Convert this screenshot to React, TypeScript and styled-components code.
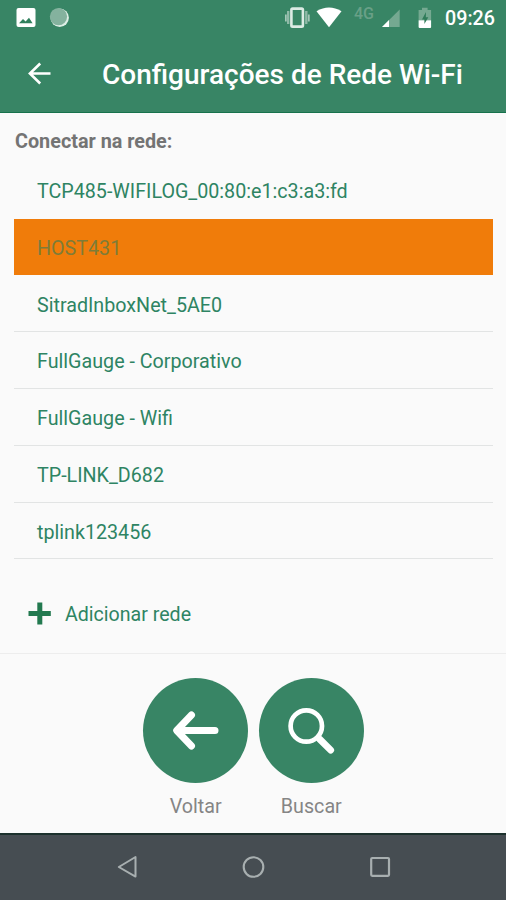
import React from 'react';
import styled, { createGlobalStyle } from 'styled-components';

const GlobalStyle = createGlobalStyle`
  * { box-sizing: border-box; }
  body { margin: 0; background: #fafafa; font-family: Roboto, "Liberation Sans", sans-serif; }
  svg { display: block; flex: none; }
`;

const green = '#388565';
const textGreen = '#2e8463';

const Screen = styled.div`
  display: flex;
  flex-direction: column;
  width: 506px;
  height: 900px;
  overflow: hidden;
  background: #fafafa;
`;

const Header = styled.header`
  height: 113px;
  background: ${green};
  border-bottom: 1px solid #17724c;
  color: #fff;
`;

const StatusBar = styled.div`
  display: flex;
  justify-content: space-between;
  height: 36px;
  padding: 0 11px 0 16px;
`;

const StatusGroup = styled.div`
  display: flex;
  align-items: center;
`;

const Clock = styled.span`
  width: 50px;
  padding-top: 1px;
  font-size: 19.7px;
  font-weight: 500;
  line-height: 36px;
  white-space: nowrap;
`;

const Toolbar = styled.div`
  display: flex;
  align-items: center;
  height: 76px;
  padding-left: 27px;
`;

const Title = styled.h1`
  margin: 2px 0 0 51px;
  font-size: 28px;
  font-weight: 500;
  line-height: 36px;
  white-space: nowrap;
`;

const IconButton = styled.button`
  padding: 0;
  border: 0;
  background: none;
  color: inherit;
`;

const Content = styled.main`
  height: 541px;
  padding: 13px 13px 0 14px;
  border-bottom: 1px solid #ededed;
`;

const SectionTitle = styled.h2`
  margin: 0 0 0 1px;
  height: 36px;
  font-size: 19.8px;
  font-weight: 700;
  line-height: 32px;
  color: #747474;
`;

const Networks = styled.ul`
  margin: 0;
  padding: 0;
  list-style: none;
`;

const Network = styled.li<{ $selected?: boolean; $plain?: boolean }>`
  height: 56.75px;
  padding-left: 23px;
  border-bottom: 1px solid ${(p) => (p.$selected || p.$plain ? 'transparent' : '#e2e4e4')};
  background: ${(p) => (p.$selected ? '#f07c0a' : 'transparent')};
  background-clip: padding-box;
  color: ${(p) => (p.$selected ? '#7d7c38' : textGreen)};
  font-size: 19.7px;
  line-height: 59px;
  white-space: nowrap;
`;

const AddNetwork = styled.button`
  display: flex;
  align-items: center;
  gap: 14px;
  height: 50px;
  margin-top: 29px;
  padding: 0 0 0 14px;
  border: 0;
  background: none;
  color: ${textGreen};
  font: 400 19.6px/26px Roboto, sans-serif;
`;

const AddLabel = styled.span`
  padding-top: 4px;
`;

const Actions = styled.section`
  display: flex;
  justify-content: center;
  gap: 10.3px;
  height: 179px;
  padding: 23.6px 0 0 1px;
`;

const Action = styled.div`
  display: flex;
  flex-direction: column;
  align-items: center;
  width: 105.3px;
`;

const RoundButton = styled.button`
  display: grid;
  place-items: center;
  width: 105.3px;
  height: 105.3px;
  padding: 0;
  border: 0;
  border-radius: 50%;
  background: ${green};
`;

const ActionLabel = styled.span`
  margin-top: 12px;
  font-size: 19.7px;
  line-height: 24px;
  color: #858585;
`;

const NavBar = styled.nav`
  display: grid;
  grid-template-columns: repeat(3, 126.5px);
  justify-content: center;
  justify-items: center;
  align-items: center;
  height: 67px;
  padding-bottom: 2px;
  border-top: 2px solid #1c312d;
  background: #464d52;
`;

const networks = [
  { name: 'TCP485-WIFILOG_00:80:e1:c3:a3:fd', plain: true },
  { name: 'HOST431', selected: true },
  { name: 'SitradInboxNet_5AE0' },
  { name: 'FullGauge - Corporativo' },
  { name: 'FullGauge - Wifi' },
  { name: 'TP-LINK_D682' },
  { name: 'tplink123456' },
];

export default function App() {
  return (
    <>
      <GlobalStyle />
      <Screen>
        <Header>
          <StatusBar>
            <StatusGroup>
              <svg width="60" height="36" viewBox="0 0 60 36">
                <rect x="0.5" y="8" width="19" height="19" rx="2" fill="#fff" />
                <path d="M3 23.3 7 19l2.6 2.6 3.4-3.8 3.6 5.5Z" fill="#30805d" />
                <circle cx="43.7" cy="17.8" r="9.2" fill="#deeee6" />
                <circle cx="42.5" cy="16.6" r="8.6" fill="#84b29e" />
              </svg>
            </StatusGroup>
            <StatusGroup>
              <svg width="160" height="36" viewBox="285 0 160 36">
                <rect x="291.4" y="8.6" width="11.5" height="18" rx="1.2" fill="none" stroke="#dcebe4" strokeWidth="2.6" />
                <path d="M288.2 11v13M306.3 11v13" stroke="#8fb9a7" strokeWidth="2.4" />
                <path d="M285.8 14.5v7M308.8 14.5v7" stroke="#a5c7b8" strokeWidth="1.8" />
                <path d="M316.5 11.2Q329 3.7 341.5 11.2L329 27.2Z" fill="#fff" />
                <text x="354" y="18.8" fontFamily="Roboto" fontSize="16" fontWeight="500" fill="#69a087">4G</text>
                <path d="M399.7 9.5V27H382Z" fill="#75a991" />
                <path d="M389 20V27H382Z" fill="#fff" />
                <path d="M422 7.7h5.6v2.2h3.5v10h-12.5v-10h3.4Z" fill="#75a991" />
                <path d="M418.6 20.2h12.5V27q0 1-1 1h-10.5q-1 0-1-1Z" fill="#fff" />
                <path d="m426 12-4 7.4h2.4V24l3.9-6.8h-2.5Z" fill="#2f7b59" />
              </svg>
              <Clock>09:26</Clock>
            </StatusGroup>
          </StatusBar>
          <Toolbar>
            <IconButton aria-label="Voltar">
              <svg width="24" height="24" viewBox="0 0 24 24" fill="none" stroke="#fff" strokeWidth="2.6">
                <path d="M23.5 11.5H3M13.2 1.5 2.9 11.5l10.3 10" />
              </svg>
            </IconButton>
            <Title>Configurações de Rede Wi-Fi</Title>
          </Toolbar>
        </Header>
        <Content>
          <SectionTitle>Conectar na rede:</SectionTitle>
          <Networks>
            {networks.map((n) => (
              <Network key={n.name} $selected={n.selected} $plain={n.plain}>
                {n.name}
              </Network>
            ))}
          </Networks>
          <AddNetwork>
            <svg width="23" height="23" viewBox="0 0 23 23">
              <path d="M11.8 0.5v22M0.5 11.5h22.3" stroke="#22794f" strokeWidth="5" />
            </svg>
            <AddLabel>Adicionar rede</AddLabel>
          </AddNetwork>
        </Content>
        <Actions>
          <Action>
            <RoundButton aria-label="Voltar">
              <svg width="105" height="105" viewBox="0 0 105 105" fill="none" stroke="#fff" strokeWidth="7" strokeLinecap="round" strokeLinejoin="round">
                <path d="M72 52.5H36M48.5 37 33.7 52.5 48.5 68" />
              </svg>
            </RoundButton>
            <ActionLabel>Voltar</ActionLabel>
          </Action>
          <Action>
            <RoundButton aria-label="Buscar">
              <svg width="105" height="105" viewBox="0 0 105 105" fill="none" stroke="#fff" strokeLinecap="round">
                <circle cx="47.3" cy="48" r="15.7" strokeWidth="4.7" />
                <path d="M60.5 61 71.7 72.2" strokeWidth="6.8" />
              </svg>
            </RoundButton>
            <ActionLabel>Buscar</ActionLabel>
          </Action>
        </Actions>
        <NavBar>
          <svg width="24" height="24" viewBox="0 0 24 24" fill="none" stroke="#a8afb0" strokeWidth="2" strokeLinejoin="round">
            <path d="M20.5 2v19.6L3.8 12Z" />
          </svg>
          <svg width="24" height="24" viewBox="0 0 24 24" fill="none" stroke="#a8afb0" strokeWidth="2.1">
            <circle cx="12.5" cy="12" r="9.8" />
          </svg>
          <svg width="24" height="24" viewBox="0 0 24 24" fill="none" stroke="#a8afb0" strokeWidth="2.2">
            <rect x="3.2" y="3" width="17.8" height="17.8" rx="1" />
          </svg>
        </NavBar>
      </Screen>
    </>
  );
}
